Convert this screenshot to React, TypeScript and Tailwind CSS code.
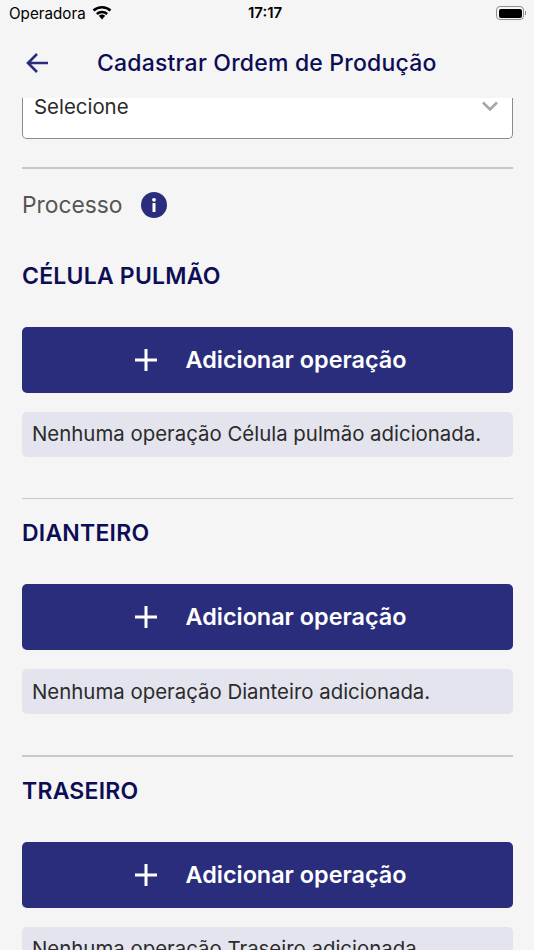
import React from 'react';

const navy = 'text-[#0d0d56]';

const Section = ({ title, name, last }: { title: string; name: string; last?: boolean }) => (
  <section className="pt-[21px]">
    <h2 className={`h-[24px] text-[23px] leading-[26px] font-semibold tracking-[0.22px] ${navy}`}>{title}</h2>
    <button className="mt-[40px] flex h-[66px] w-full items-center justify-center rounded-[5px] bg-[#2a2d7c] pl-[6px] text-white">
      <svg width="24" height="24" viewBox="0 0 24 24" className="mr-[28px] -ml-[1px]" fill="none" stroke="white" strokeWidth="3">
        <path d="M12 1v22M1 12h22" />
      </svg>
      <span className="text-[23.4px] leading-[28px] font-semibold">Adicionar operação</span>
    </button>
    <div className="mt-[19px] flex h-[45px] items-center rounded-[5px] bg-[#e4e4ee] px-[10px] pt-[1px] text-[20.4px] text-[#2b2b2b]">
      Nenhuma operação {name} adicionada.
    </div>
    {!last && <div className="mt-[41px] h-[1.5px] bg-[#c8c8c8]" />}
  </section>
);

export default function App() {
  return (
    <div className="flex h-[950px] w-[534px] flex-col overflow-hidden bg-[#f5f5f5] font-['Inter',sans-serif]">
      {/* status bar */}
      <div className="relative flex h-[28px] shrink-0 items-center px-[9px] font-['Inter',sans-serif] text-black">
        <span className="text-[15.200px] leading-[20px]">Operadora</span>
        <svg width="20" height="15" viewBox="0 0 20 15" className="mb-[3px] ml-[6px]" fill="none" stroke="black" strokeWidth="2.500">
          <path d="M1.500 5.500a12.500 12.500 0 0 1 17 0" />
          <path d="M4.800 9a7.800 7.800 0 0 1 10.400 0" />
          <path d="M6.800 10.800a5 5 0 0 1 6.400 0L10 14.500z" fill="black" stroke="none" />
        </svg>
        <span className="absolute top-[3px] left-[248px] text-[15px] leading-[20px] font-semibold">17:17</span>
        <div className="absolute top-[6px] left-[496px] flex items-center">
          <div className="flex h-[14px] w-[28px] items-center rounded-[4px] border border-[#8f8f8f] p-[1.5px]">
            <div className="h-full w-full rounded-[2px] bg-black" />
          </div>
          <div className="ml-[1px] h-[4px] w-[1px] bg-[#8f8f8f]" />
        </div>
      </div>

      {/* header */}
      <div className="flex h-[70px] shrink-0 items-center pb-[1px]">
        <svg width="22" height="22" viewBox="0 0 22 22" className="ml-[26px]" fill="none" stroke="#2a2d7c" strokeWidth="2.6">
          <path d="M22 11H2M11 2l-9 9 9 9" />
        </svg>
        <h1 className={`ml-[49px] text-[23px] leading-[30px] font-medium tracking-[0.2px] ${navy}`}>Cadastrar Ordem de Produção</h1>
      </div>

      {/* scroll area */}
      <div className="min-h-0 flex-1 overflow-hidden pr-[21px] pl-[22px]">
        <div className="flex h-[41px] items-start justify-between rounded-b-[5px] border-x-[1.5px] border-b-[1.5px] border-[#8a8a8a] bg-white pr-[13px] pl-[11px]">
          <span className="text-[20.4px] leading-[18px] text-[#2b2b2b]">Selecione</span>
          <svg width="18" height="11" viewBox="0 0 18 11" className="mt-[3px]" fill="none" stroke="#a6a6a6" strokeWidth="2.600">
            <path d="M2 1.500l7 7 7-7" />
          </svg>
        </div>
        <div className="mt-[28px] h-[1.5px] bg-[#c8c8c8]" />
        <div className="mt-[22px] flex h-[28px] items-center">
          <span className="text-[22.800px] leading-[28px] text-[#555555]">Processo</span>
          <svg width="26" height="26" viewBox="0 0 26 26" className="ml-[19px]">
            <circle cx="13" cy="13" r="13" fill="#2a2d7c" />
            <circle cx="13" cy="7.800" r="1.900" fill="white" />
            <rect x="11.500" y="11" width="3" height="9" rx="0.500" fill="white" />
          </svg>
        </div>
        <div className="pt-[23px]">
          <Section title="CÉLULA PULMÃO" name="Célula pulmão" />
          <Section title="DIANTEIRO" name="Dianteiro" />
          <Section title="TRASEIRO" name="Traseiro" last />
        </div>
      </div>
    </div>
  );
}
